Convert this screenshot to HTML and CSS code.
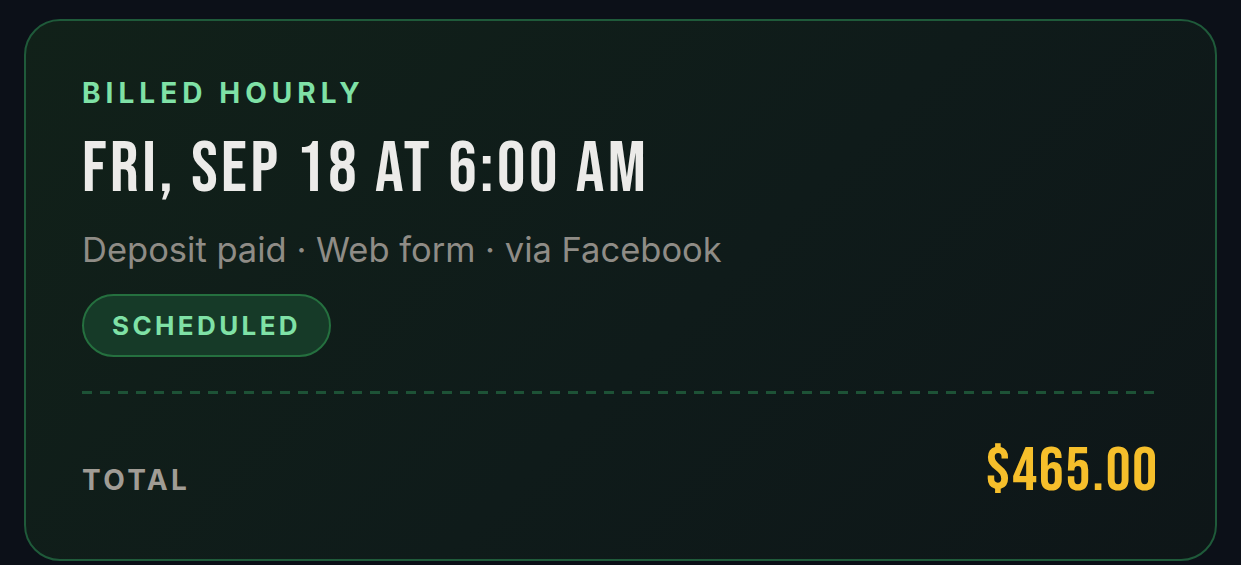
FILE: index.html
```html
<!DOCTYPE html>
<html lang="en">
<head>
<meta charset="utf-8">
<title>Booking</title>
<link rel="stylesheet" href="styles.css">
</head>
<body>
<main class="page">
  <section class="card">
    <div class="eyebrow">BILLED HOURLY</div>
    <h1 class="title">FRI, SEP 18 AT 6:00 AM</h1>
    <p class="meta">Deposit paid · Web form · via Facebook</p>
    <span class="pill">SCHEDULED</span>
    <div class="divider"></div>
    <div class="total-row">
      <span class="total-label">TOTAL</span>
      <span class="total-amount">$465.00</span>
    </div>
  </section>
</main>
</body>
</html>
```

FILE: styles.css
```css
* { box-sizing: border-box; }
html, body { margin: 0; padding: 0; }
body {
  background: #0c1018;
  font-family: Inter, "Noto Sans", "Liberation Sans", sans-serif;
  width: 1241px;
  height: 565px;
  overflow: hidden;
}
.page {
  padding: 19px 24px 0 24px;
}
.card {
  display: flex;
  flex-direction: column;
  align-items: flex-start;
  border: 2px solid #1f5a3a;
  border-radius: 36px;
  background: linear-gradient(135deg, #112119 0%, #0f1b1a 55%, #0e1618 100%);
  padding: 55px 56px 40px 56px;
  height: 542px;
}
.eyebrow {
  font-size: 28px;
  line-height: 34px;
  font-weight: 700;
  letter-spacing: 0.18em;
  color: #7fe1a6;
}
.title {
  margin: 20px 0 0 0;
  font-family: "Bebas Neue", Oswald, "League Gothic", "Liberation Sans Narrow", "Roboto Condensed", "DejaVu Sans Condensed", sans-serif;
  font-weight: 400;
  font-size: 71px;
  line-height: 80px;
  color: #ecebe9;
  letter-spacing: 0.05em;
}
.meta {
  margin: 20px 0 0 0;
  font-size: 34.5px;
  line-height: 40px;
  color: #8f8c86;
}
.pill {
  margin-top: 24px;
  display: inline-flex;
  align-items: center;
  height: 63px;
  padding: 0 28px;
  border: 2px solid #25703f;
  border-radius: 999px;
  background: #163a28;
  color: #7fe1a6;
  font-size: 26px;
  font-weight: 700;
  letter-spacing: 0.13em;
}
.divider {
  align-self: stretch;
  margin: 34px 0 0 0;
  height: 3px;
  background: repeating-linear-gradient(90deg, #1d5236 0 10px, transparent 10px 18px);
}
.total-row {
  align-self: stretch;
  display: flex;
  justify-content: space-between;
  align-items: baseline;
  margin-top: 43px;
}
.total-label {
  font-size: 28px;
  font-weight: 700;
  letter-spacing: 0.12em;
  color: #a09c95;
}
.total-amount {
  font-family: "Bebas Neue", Oswald, "League Gothic", "Liberation Sans Narrow", "Roboto Condensed", "DejaVu Sans Condensed", sans-serif;
  font-weight: 400;
  font-size: 62px;
  line-height: 70px;
  letter-spacing: 0.03em;
  color: #f6bf2b;
}
```
